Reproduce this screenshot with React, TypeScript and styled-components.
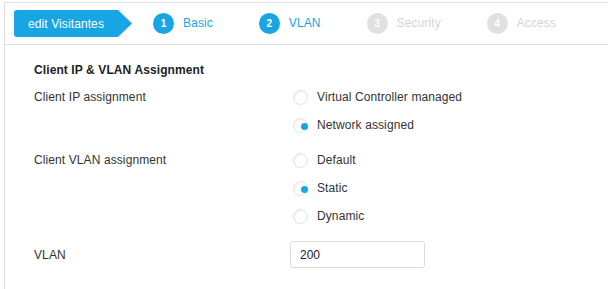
import React from "react";
import styled, { createGlobalStyle } from "styled-components";

const Global = createGlobalStyle`
  html, body { margin: 0; padding: 0; background: #fff; }
  body {
    font-family: "Liberation Sans", Arial, Helvetica, sans-serif;
    font-size: 12px;
    letter-spacing: 0.1px;
    color: #333;
    padding: 2px 0 0 4px;
  }
  * { box-sizing: border-box; }
`;

const BLUE = "#17a6e3";

const Frame = styled.div`
  border-top: 1px solid #dedede;
  border-left: 1px solid #dedede;
  height: 287px;
  overflow: hidden;
`;

const Header = styled.div`
  height: 42px;
  border-bottom: 1px solid #dedede;
  display: flex;
  align-items: center;
  padding-left: 9px;
`;

const EditTab = styled.div`
  height: 27px;
  display: flex;
  align-items: center;
  padding: 0 28px 0 14px;
  background: ${BLUE};
  color: #fff;
  border-radius: 3px 0 0 3px;
  clip-path: polygon(0 0, calc(100% - 14px) 0, 100% 50%, calc(100% - 14px) 100%, 0 100%);
  margin-right: 21px;
`;

const Steps = styled.div`
  display: flex;
  align-items: center;
  gap: 46px;
`;

const Step = styled.div<{ $active: boolean }>`
  display: flex;
  align-items: center;
  gap: 9px;
  color: ${(p) => (p.$active ? BLUE : "#d4d4d4")};
  margin-top: -1px;
`;

const StepNum = styled.span<{ $active: boolean }>`
  width: 21px;
  height: 21px;
  border-radius: 50%;
  background: ${(p) => (p.$active ? BLUE : "#e0e0e0")};
  color: #fff;
  font-size: 10px;
  font-weight: bold;
  letter-spacing: 0;
  display: flex;
  align-items: center;
  justify-content: center;
`;

const Section = styled.div`
  padding: 17px 0 0 29px;
`;

const Heading = styled.div`
  font-weight: bold;
  color: #222;
  line-height: 16px;
  margin-bottom: 5px;
`;

const FormRow = styled.div<{ $gap?: number }>`
  display: grid;
  grid-template-columns: 256px 1fr;
  align-items: start;
  margin-top: ${(p) => p.$gap ?? 0}px;
`;

const Label = styled.div<{ $h: number }>`
  height: ${(p) => p.$h}px;
  display: flex;
  align-items: center;
  color: #333;
`;

const RadioList = styled.div`
  display: flex;
  flex-direction: column;
`;

const RadioRow = styled.label`
  height: 28px;
  display: flex;
  align-items: center;
  gap: 9px;
  padding-left: 3px;
  color: #333;
`;

const RadioCircle = styled.span<{ $checked: boolean }>`
  position: relative;
  width: 15px;
  height: 15px;
  border-radius: 50%;
  border: 1px solid #e3e3e3;
  background: #fff;
  box-shadow: inset 1px 1px 1px rgba(0, 0, 0, 0.06);
  flex: none;
  ${(p) =>
    p.$checked &&
    `
    &::after {
      content: "";
      position: absolute;
      width: 7px;
      height: 7px;
      border-radius: 50%;
      background: ${BLUE};
      right: -1px;
      top: 4px;
    }
  `}
`;

const TextInput = styled.input`
  width: 135px;
  height: 27px;
  border: 1px solid #dcdcdc;
  border-radius: 3px;
  padding: 0 9px;
  font-family: inherit;
  font-size: 12px;
  color: #222;
  outline: none;
`;

const Radio = ({ label, checked }: { label: string; checked?: boolean }) => (
  <RadioRow>
    <RadioCircle $checked={!!checked} />
    {label}
  </RadioRow>
);

const steps = [
  { n: 1, label: "Basic", active: true },
  { n: 2, label: "VLAN", active: true },
  { n: 3, label: "Security", active: false },
  { n: 4, label: "Access", active: false },
];

export default function App() {
  return (
    <>
      <Global />
      <Frame>
        <Header>
          <EditTab>edit Visitantes</EditTab>
          <Steps>
            {steps.map((s) => (
              <Step key={s.n} $active={s.active}>
                <StepNum $active={s.active}>{s.n}</StepNum>
                {s.label}
              </Step>
            ))}
          </Steps>
        </Header>
        <Section>
          <Heading>Client IP &amp; VLAN Assignment</Heading>
          <FormRow>
            <Label $h={28}>Client IP assignment</Label>
            <RadioList>
              <Radio label="Virtual Controller managed" />
              <Radio label="Network assigned" checked />
            </RadioList>
          </FormRow>
          <FormRow $gap={7}>
            <Label $h={28}>Client VLAN assignment</Label>
            <RadioList>
              <Radio label="Default" />
              <Radio label="Static" checked />
              <Radio label="Dynamic" />
            </RadioList>
          </FormRow>
          <FormRow $gap={11}>
            <Label $h={27}>VLAN</Label>
            <TextInput defaultValue="200" />
          </FormRow>
        </Section>
      </Frame>
    </>
  );
}
